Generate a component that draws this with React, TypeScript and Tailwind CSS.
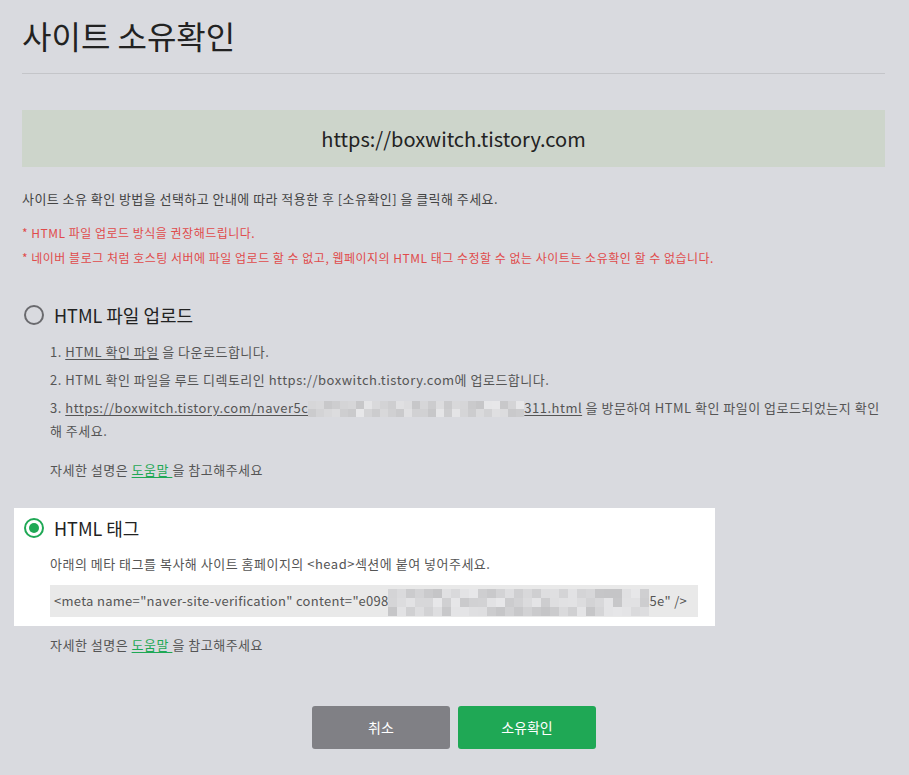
import React from 'react'

const font = { fontFamily: '"Noto Sans CJK KR", "Noto Sans", sans-serif' }

// deterministic gray cells standing in for the mosaic blur
function Mosaic({ cols, rows, cell, seed }: { cols: number; rows: number; cell: number; seed: number }) {
  let s = seed
  const rand = () => {
    s = (s * 9301 + 49297) % 233280
    return s / 233280
  }
  const cells = []
  for (let r = 0; r < rows; r++) {
    for (let c = 0; c < cols; c++) {
      const v = Math.round(196 + rand() * 36)
      cells.push(
        <span
          key={`${r}-${c}`}
          className="block"
          style={{ width: cell, height: cell, background: `rgb(${v},${v},${v + 2})` }}
        />
      )
    }
  }
  return (
    <span
      className="inline-grid align-middle"
      style={{ gridTemplateColumns: `repeat(${cols}, ${cell}px)` }}
    >
      {cells}
    </span>
  )
}

function Radio({ checked }: { checked?: boolean }) {
  if (checked) {
    return (
      <span className="flex h-[20px] w-[20px] items-center justify-center rounded-full border-2 border-[#1fa855]">
        <span className="h-[10px] w-[10px] rounded-full bg-[#1fa855]" />
      </span>
    )
  }
  return <span className="h-[20px] w-[20px] rounded-full border-2 border-[#6a6a6e]" />
}

function HelpLine({ className }: { className?: string }) {
  return (
    <p className={`pl-[28px] text-[13px] leading-[23px] tracking-[0.5px] text-[#555] ${className ?? ''}`}>
      자세한 설명은{' '}
      <a className="text-[#1fa855] underline underline-offset-2">도움말 </a>
      을 참고해주세요
    </p>
  )
}

export default function App() {
  return (
    <div className="min-h-screen w-full bg-[#d9dadf] px-[22px]" style={font}>
      <div className="w-[863px]">
        {/* Title */}
        <h1 className="border-b border-[#c4c5c9] pb-[18px] pt-[15px] text-[32px] leading-[40px] font-normal text-[#222]">
          사이트 소유확인
        </h1>

        {/* Site URL */}
        <div className="mt-[36px] flex h-[57px] items-center justify-center bg-[#cdd5cb] text-[20px] text-[#222]">
          https://boxwitch.tistory.com
        </div>

        <p className="mt-[22px] text-[13px] leading-[20px] tracking-[0.45px] text-[#444]">
          사이트 소유 확인 방법을 선택하고 안내에 따라 적용한 후 [소유확인] 을 클릭해 주세요.
        </p>
        <p className="mt-[14px] text-[12px] leading-[20px] tracking-[0.5px] text-[#e04b4b]">
          * HTML 파일 업로드 방식을 권장해드립니다.
        </p>
        <p className="mt-[5px] text-[12px] leading-[20px] tracking-[0.5px] text-[#e04b4b]">
          * 네이버 블로그 처럼 호스팅 서버에 파일 업로드 할 수 없고, 웹페이지의 HTML 태그 수정할 수 없는 사이트는 소유확인 할 수 없습니다.
        </p>

        {/* Option 1 */}
        <div className="mt-[35px] flex h-[24px] items-center gap-[10px] pl-[2px]">
          <Radio />
          <span className="text-[18px] text-[#222]">HTML 파일 업로드</span>
        </div>
        <ol className="mt-[13px] flex flex-col gap-[5px] pl-[28px] text-[13px] leading-[23px] tracking-[0.5px] text-[#555] break-keep">
          <li>
            1. <a className="underline underline-offset-2">HTML 확인 파일</a> 을 다운로드합니다.
          </li>
          <li>2. HTML 확인 파일을 루트 디렉토리인 https://boxwitch.tistory.com에 업로드합니다.</li>
          <li>
            3.{' '}
            <a className="underline underline-offset-2">
              https://boxwitch.tistory.com/naver5c
              <Mosaic cols={27} rows={2} cell={8} seed={7} />
              311.html
            </a>{' '}
            을 방문하여 HTML 확인 파일이 업로드되었는지 확인 해 주세요.
          </li>
        </ol>
        <HelpLine className="mt-[16px]" />

        {/* Option 2 (selected) */}
        <div className="-mx-[8px] mt-[27px] w-[701px] bg-white px-[8px] pb-[9px] pt-[8px]">
          <div className="flex h-[24px] items-center gap-[10px] pl-[2px]">
            <Radio checked />
            <span className="text-[18px] text-[#222]">HTML 태그</span>
          </div>
          <p className="mt-[14px] pl-[28px] text-[13px] leading-[20px] tracking-[0.5px] text-[#555]">
            아래의 메타 태그를 복사해 사이트 홈페이지의 &lt;head&gt;섹션에 붙여 넣어주세요.
          </p>
          <div className="ml-[28px] mt-[11px] h-[32px] w-[648px] overflow-hidden whitespace-nowrap bg-[#e9e9e9] px-[4px] text-[13px] leading-[32px] tracking-[0.3px] text-[#555]">
            &lt;meta name="naver-site-verification" content="e098
            <Mosaic cols={29} rows={3} cell={9} seed={31} />
            5e" /&gt;
          </div>
        </div>
        <HelpLine className="mt-[7px]" />

        {/* Buttons */}
        <div className="mt-[50px] flex justify-center gap-[8px] pb-[26px] pl-[1px]">
          <button className="h-[43px] w-[138px] rounded-[3px] bg-[#808085] text-[14px] text-white">
            취소
          </button>
          <button className="h-[43px] w-[138px] rounded-[3px] bg-[#1fa855] text-[14px] text-white">
            소유확인
          </button>
        </div>
      </div>
    </div>
  )
}
